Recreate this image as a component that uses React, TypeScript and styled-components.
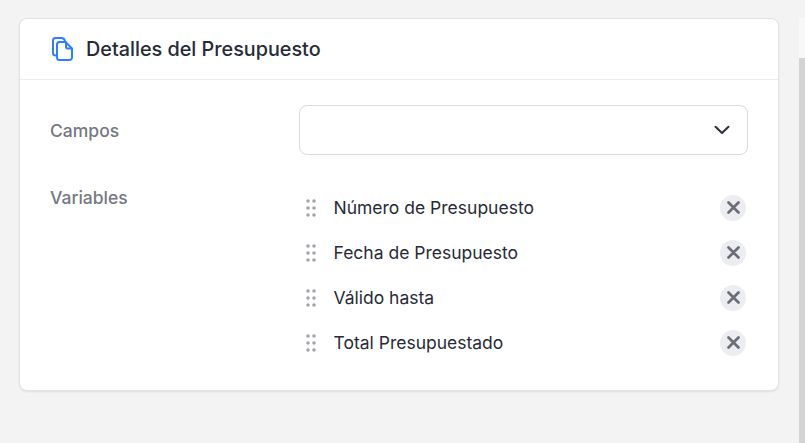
import React from "react";
import styled, { createGlobalStyle } from "styled-components";

const GlobalStyle = createGlobalStyle`
  html, body {
    margin: 0;
    height: 100%;
    overflow: hidden;
    background: #f3f3f3;
    font-family: Inter, "Liberation Sans", sans-serif;
  }
`;

const variables = [
  "Número de Presupuesto",
  "Fecha de Presupuesto",
  "Válido hasta",
  "Total Presupuestado",
];

const DocsIcon = () => (
  <svg width="24" height="26" viewBox="0 0 24 26" fill="none" stroke="#2b7fff" strokeWidth="2" strokeLinejoin="round" strokeLinecap="round">
    <path d="M6 19.5H4.5A2.5 2.5 0 0 1 2 17V4.5A2.5 2.5 0 0 1 4.5 2H10a4 4 0 0 1 4 3.5" />
    <path d="M6 8.5A2.5 2.5 0 0 1 8.500 6H14.500L21 12.500V21.500A2.500 2.500 0 0 1 18.500 24H8.500A2.500 2.500 0 0 1 6 21.500Z" fill="#fff" />
    <path d="M15 6.500V11A1.500 1.500 0 0 0 16.500 12.500H20.500" />
  </svg>
);

const ChevronIcon = () => (
  <svg width="16" height="10" viewBox="0 0 16 10" fill="none" stroke="#2a2f3c" strokeWidth="2" strokeLinecap="round" strokeLinejoin="round">
    <path d="M1.500 1.800L8 8L14.500 1.800" />
  </svg>
);

const CloseIcon = () => (
  <svg width="13" height="13" viewBox="0 0 13 13" fill="none" stroke="#6b6e78" strokeWidth="2.700" strokeLinecap="round">
    <path d="M1.500 1.500L11.500 11.500M11.500 1.500L1.500 11.500" />
  </svg>
);

const GripIcon = () => (
  <svg width="10" height="18" viewBox="0 0 10 18" fill="#a3a5ab">
    <circle cx="2" cy="2" r="1.800" />
    <circle cx="8" cy="2" r="1.800" />
    <circle cx="2" cy="9" r="1.800" />
    <circle cx="8" cy="9" r="1.800" />
    <circle cx="2" cy="16" r="1.800" />
    <circle cx="8" cy="16" r="1.800" />
  </svg>
);

const App = () => {
  return (
    <>
      <GlobalStyle />
      <Page>
        <Main>
          <Card>
            <CardHeader>
              <DocsIcon />
              <CardTitle>Detalles del Presupuesto</CardTitle>
            </CardHeader>
            <CardBody>
              <FieldRow>
                <FieldLabel>Campos</FieldLabel>
                <SelectBox>
                  <ChevronIcon />
                </SelectBox>
              </FieldRow>
              <VariablesRow>
                <VariablesLabel>Variables</VariablesLabel>
                <VariableList>
                  {variables.map((name) => (
                    <VariableItem key={name}>
                      <GripHandle>
                        <GripIcon />
                      </GripHandle>
                      <VariableName>{name}</VariableName>
                      <RemoveButton>
                        <CloseIcon />
                      </RemoveButton>
                    </VariableItem>
                  ))}
                </VariableList>
              </VariablesRow>
            </CardBody>
          </Card>
        </Main>
        <ScrollTrack>
          <ScrollGap />
          <ScrollThumb />
        </ScrollTrack>
      </Page>
    </>
  );
};

export default App;

const Page = styled.div`
  display: flex;
  width: 805px;
  height: 443px;
`;

const Main = styled.main`
  flex: 1;
  padding: 18px 20px 0 19px;
`;

const Card = styled.section`
  box-sizing: border-box;
  height: 373px;
  background: #ffffff;
  border: 1px solid #e2e2e4;
  border-radius: 8px;
  box-shadow: 0 1px 2px rgba(0, 0, 0, 0.08);
`;

const CardHeader = styled.header`
  box-sizing: border-box;
  display: flex;
  align-items: center;
  gap: 11px;
  height: 61px;
  padding: 0 31px;
  border-bottom: 1px solid #ececee;
`;

const CardTitle = styled.h2`
  margin: 0;
  font-size: 19.800px;
  font-weight: 500;
  color: #272b36;
`;

const CardBody = styled.div`
  display: flex;
  flex-direction: column;
  gap: 30px;
  padding: 25px 30px 0;
`;

const FieldRow = styled.div`
  display: grid;
  grid-template-columns: 249px 449px;
  align-items: center;
`;

const VariablesRow = styled(FieldRow)`
  align-items: start;
`;

const FieldLabel = styled.div`
  font-size: 17.500px;
  font-weight: 500;
  color: #767882;
`;

const VariablesLabel = styled(FieldLabel)`
  margin-top: 2px;
`;

const SelectBox = styled.div`
  box-sizing: border-box;
  display: flex;
  align-items: center;
  justify-content: flex-end;
  height: 50px;
  padding: 0 17px;
  border: 1px solid #d9d9dc;
  border-radius: 8px;
`;

const VariableList = styled.div`
  display: flex;
  flex-direction: column;
`;

const VariableItem = styled.div`
  display: flex;
  align-items: center;
  height: 45px;
  padding: 0 2px 0 7px;
`;

const GripHandle = styled.div`
  display: flex;
  width: 27.500px;
`;

const VariableName = styled.span`
  flex: 1;
  font-size: 17.500px;
  color: #272b36;
`;

const RemoveButton = styled.div`
  display: flex;
  align-items: center;
  justify-content: center;
  width: 26px;
  height: 26px;
  border-radius: 50%;
  background: #ecedf0;
`;

const ScrollTrack = styled.aside`
  display: flex;
  flex-direction: column;
  width: 6px;
`;

const ScrollGap = styled.div`
  height: 18px;
`;

const ScrollThumb = styled.div`
  flex: 1;
  background: linear-gradient(#f8f8f8 0 40px, #d3d3d3 40px);
`;
